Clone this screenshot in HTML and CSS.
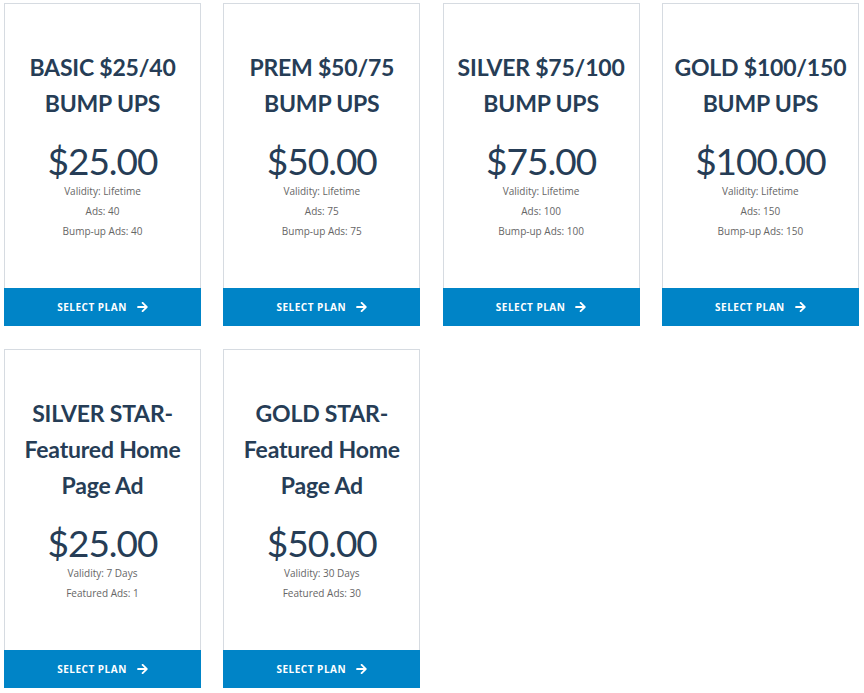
FILE: index.html
```html
<!DOCTYPE html>
<html lang="en">
<head>
  <meta charset="UTF-8">
  <meta name="viewport" content="width=device-width, initial-scale=1.0">
  <title>Pricing Plans</title>
  <link rel="stylesheet" href="styles.css">
</head>
<body>
  <div class="plans">
    <div class="plan">
      <div class="plan-body">
        <h3>BASIC $25/40<br>BUMP UPS</h3>
        <div class="price">$25.00</div>
        <ul class="details">
          <li>Validity: Lifetime</li>
          <li>Ads: 40</li>
          <li>Bump-up Ads: 40</li>
        </ul>
      </div>
      <a class="select-btn" href="#">SELECT PLAN <svg viewBox="0 0 448 512"><path d="M190.5 66.9l22.2-22.2c9.4-9.4 24.6-9.4 33.9 0L441 239c9.4 9.4 9.4 24.6 0 33.9L246.6 467.3c-9.4 9.4-24.6 9.4-33.9 0l-22.2-22.2c-9.5-9.5-9.3-25 .4-34.3L311.4 296H24c-13.3 0-24-10.7-24-24v-32c0-13.3 10.7-24 24-24h287.4L190.9 101.2c-9.8-9.3-10-24.8-.4-34.3z"/></svg></a>
    </div>

    <div class="plan">
      <div class="plan-body">
        <h3>PREM $50/75<br>BUMP UPS</h3>
        <div class="price">$50.00</div>
        <ul class="details">
          <li>Validity: Lifetime</li>
          <li>Ads: 75</li>
          <li>Bump-up Ads: 75</li>
        </ul>
      </div>
      <a class="select-btn" href="#">SELECT PLAN <svg viewBox="0 0 448 512"><path d="M190.5 66.9l22.2-22.2c9.4-9.4 24.6-9.4 33.9 0L441 239c9.4 9.4 9.4 24.6 0 33.9L246.6 467.3c-9.4 9.4-24.6 9.4-33.9 0l-22.2-22.2c-9.5-9.5-9.3-25 .4-34.3L311.4 296H24c-13.3 0-24-10.7-24-24v-32c0-13.3 10.7-24 24-24h287.4L190.9 101.2c-9.8-9.3-10-24.8-.4-34.3z"/></svg></a>
    </div>

    <div class="plan">
      <div class="plan-body">
        <h3>SILVER $75/100<br>BUMP UPS</h3>
        <div class="price">$75.00</div>
        <ul class="details">
          <li>Validity: Lifetime</li>
          <li>Ads: 100</li>
          <li>Bump-up Ads: 100</li>
        </ul>
      </div>
      <a class="select-btn" href="#">SELECT PLAN <svg viewBox="0 0 448 512"><path d="M190.5 66.9l22.2-22.2c9.4-9.4 24.6-9.4 33.9 0L441 239c9.4 9.4 9.4 24.6 0 33.9L246.6 467.3c-9.4 9.4-24.6 9.4-33.9 0l-22.2-22.2c-9.5-9.5-9.3-25 .4-34.3L311.4 296H24c-13.3 0-24-10.7-24-24v-32c0-13.3 10.7-24 24-24h287.4L190.9 101.2c-9.8-9.3-10-24.8-.4-34.3z"/></svg></a>
    </div>

    <div class="plan">
      <div class="plan-body">
        <h3>GOLD $100/150<br>BUMP UPS</h3>
        <div class="price">$100.00</div>
        <ul class="details">
          <li>Validity: Lifetime</li>
          <li>Ads: 150</li>
          <li>Bump-up Ads: 150</li>
        </ul>
      </div>
      <a class="select-btn" href="#">SELECT PLAN <svg viewBox="0 0 448 512"><path d="M190.5 66.9l22.2-22.2c9.4-9.4 24.6-9.4 33.9 0L441 239c9.4 9.4 9.4 24.6 0 33.9L246.6 467.3c-9.4 9.4-24.6 9.4-33.9 0l-22.2-22.2c-9.5-9.5-9.3-25 .4-34.3L311.4 296H24c-13.3 0-24-10.7-24-24v-32c0-13.3 10.7-24 24-24h287.4L190.9 101.2c-9.8-9.3-10-24.8-.4-34.3z"/></svg></a>
    </div>

    <div class="plan">
      <div class="plan-body">
        <h3>SILVER STAR-<br>Featured Home<br>Page Ad</h3>
        <div class="price">$25.00</div>
        <ul class="details">
          <li>Validity: 7 Days</li>
          <li>Featured Ads: 1</li>
        </ul>
      </div>
      <a class="select-btn" href="#">SELECT PLAN <svg viewBox="0 0 448 512"><path d="M190.5 66.9l22.2-22.2c9.4-9.4 24.6-9.4 33.9 0L441 239c9.4 9.4 9.4 24.6 0 33.9L246.6 467.3c-9.4 9.4-24.6 9.4-33.9 0l-22.2-22.2c-9.5-9.5-9.3-25 .4-34.3L311.4 296H24c-13.3 0-24-10.7-24-24v-32c0-13.3 10.7-24 24-24h287.4L190.9 101.2c-9.8-9.3-10-24.8-.4-34.3z"/></svg></a>
    </div>

    <div class="plan">
      <div class="plan-body">
        <h3>GOLD STAR-<br>Featured Home<br>Page Ad</h3>
        <div class="price">$50.00</div>
        <ul class="details">
          <li>Validity: 30 Days</li>
          <li>Featured Ads: 30</li>
        </ul>
      </div>
      <a class="select-btn" href="#">SELECT PLAN <svg viewBox="0 0 448 512"><path d="M190.5 66.9l22.2-22.2c9.4-9.4 24.6-9.4 33.9 0L441 239c9.4 9.4 9.4 24.6 0 33.9L246.6 467.3c-9.4 9.4-24.6 9.4-33.9 0l-22.2-22.2c-9.5-9.5-9.3-25 .4-34.3L311.4 296H24c-13.3 0-24-10.7-24-24v-32c0-13.3 10.7-24 24-24h287.4L190.9 101.2c-9.8-9.3-10-24.8-.4-34.3z"/></svg></a>
    </div>
  </div>
</body>
</html>
```

FILE: styles.css
```css
body {
  margin: 0;
  padding: 3px 4px;
  background: #fff;
  font-family: "Open Sans", sans-serif;
}

.plans {
  display: grid;
  grid-template-columns: repeat(4, 197px);
  column-gap: 22.3px;
  row-gap: 23px;
  align-items: start;
}

.plan {
  display: flex;
  flex-direction: column;
}

.plan-body {
  border: 1px solid #d6dbe1;
  border-bottom: none;
  padding: 45px 0 47px;
  text-align: center;
}

.plan h3 {
  margin: 0;
  font-family: "Lato", sans-serif;
  font-weight: 700;
  font-size: 23px;
  line-height: 36px;
  letter-spacing: -0.2px;
  color: #263d56;
  white-space: nowrap;
}

.price {
  margin-top: 20px;
  font-family: "Lato", sans-serif;
  font-weight: 400;
  font-size: 37px;
  line-height: 40px;
  letter-spacing: -1px;
  color: #263d56;
}

.details { list-style: none; margin: 0; padding: 0; }
.details li {
  font-size: 10px;
  line-height: 20px;
  color: #666;
}

.select-btn {
  display: flex;
  align-items: center;
  justify-content: center;
  gap: 10px;
  height: 38px;
  background: #0084c7;
  color: #fff;
  text-decoration: none;
  font-size: 10px;
  font-weight: 700;
  letter-spacing: 0.5px;
}
.select-btn svg { width: 11px; height: 12px; fill: #fff; }
```
